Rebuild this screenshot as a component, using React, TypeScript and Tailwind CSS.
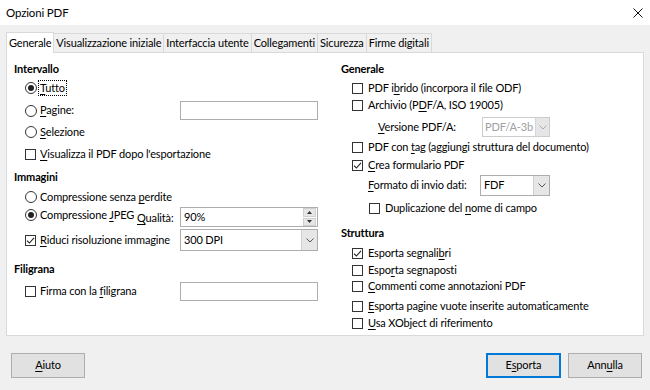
import type { ReactNode } from 'react';

function U({ children }: { children: ReactNode }) {
  return <span className="underline underline-offset-[2px] decoration-[1px]">{children}</span>;
}

function RadioDot({ checked }: { checked?: boolean }) {
  return (
    <span className="w-[12px] h-[12px] rounded-full border border-[#333] bg-white flex items-center justify-center shrink-0">
      {checked && <span className="w-[6px] h-[6px] rounded-full bg-[#222]" />}
    </span>
  );
}

function Box({ checked }: { checked?: boolean }) {
  return (
    <span className="w-[11px] h-[11px] border border-[#333] bg-white flex items-center justify-center shrink-0">
      {checked && (
        <svg width="9" height="9" viewBox="0 0 9 9">
          <path d="M1 4.6 L3.4 7 L8 1.8" stroke="#222" strokeWidth="1.1" fill="none" />
        </svg>
      )}
    </span>
  );
}

function Chevron({ color = '#555' }: { color?: string }) {
  return (
    <svg width="8" height="5" viewBox="0 0 8 5">
      <path d="M0.5 0.5 L4 4 L7.5 0.5" stroke={color} strokeWidth="1" fill="none" />
    </svg>
  );
}

export default function App() {
  return (
    <div className="w-[650px] h-[390px] bg-[#f0f0f0] flex flex-col text-[11px] tracking-[-0.15px] text-[#000] font-['Lato',sans-serif] overflow-hidden">
      {/* Title bar */}
      <div className="h-[25px] bg-white flex items-center justify-between pl-[6px] pr-[6px]">
        <span className="text-[11.5px]">Opzioni PDF</span>
        <svg width="10" height="10" viewBox="0 0 10 10" className="mr-[1px]">
          <path d="M0.5 0.5 L9.5 9.5 M9.5 0.5 L0.5 9.5" stroke="#111" strokeWidth="1" />
        </svg>
      </div>

      {/* Tabs */}
      <div className="flex items-end ml-[6px] mt-[7px] h-[20px]">
        <div className="relative z-10 -mb-px h-[21px] px-[2px] bg-white border-x border-t border-[#d9d9d9] flex items-center">
          Generale
        </div>
        {['Visualizzazione iniziale', 'Interfaccia utente', 'Collegamenti', 'Sicurezza', 'Firme digitali'].map((t) => (
          <div
            key={t}
            className="h-[19px] px-[2px] bg-[#f0f0f0] border-t border-r border-[#d9d9d9] flex items-center whitespace-nowrap"
          >
            {t}
          </div>
        ))}
      </div>

      {/* Panel */}
      <div className="mx-[6px] h-[284px] bg-white border border-[#d9d9d9] flex pl-[7px]">
        {/* Left column */}
        <div className="w-[304px] flex flex-col whitespace-nowrap">
          <div className="mt-[8px] h-[16px] flex items-center font-bold">Intervallo</div>
          <div className="mt-[2px] h-[18px] flex items-center ml-[11px] gap-[2px]">
            <RadioDot checked />
            <span className="outline outline-1 outline-dotted outline-[#000] px-[1px] leading-[14px]">
              <U>T</U>utto
            </span>
          </div>
          <div className="mt-[4px] h-[19px] flex items-center">
            <div className="w-[166px] flex items-center ml-[11px] gap-[3px]">
              <RadioDot />
              <span>
                <U>P</U>agine:
              </span>
            </div>
            <div className="-ml-[11px] w-[138px] h-[19px] border border-[#adadad] bg-white" />
          </div>
          <div className="mt-[3px] h-[18px] flex items-center ml-[11px] gap-[3px]">
            <RadioDot />
            <span>
              <U>S</U>elezione
            </span>
          </div>
          <div className="mt-[4px] h-[18px] flex items-center ml-[11px] gap-[4px]">
            <Box />
            <span>
              <U>V</U>isualizza il PDF dopo l'esportazione
            </span>
          </div>
          <div className="mt-[6px] h-[16px] flex items-center font-bold">Immagini</div>
          <div className="mt-[3px] h-[18px] flex items-center ml-[11px] gap-[3px]">
            <RadioDot />
            <span>
              Compressione senza <U>p</U>erdite
            </span>
          </div>
          <div className="mt-[1px] h-[20px] flex items-center">
            <div className="w-[112px] ml-[11px] flex items-center gap-[3px] -mt-[4px]">
              <RadioDot checked />
              <span>
                Compressione <U>J</U>PEG
              </span>
            </div>
            <span className="w-[43px] mt-[3px]">
              <U>Q</U>ualità:
            </span>
            <div className="w-[138px] h-[20px] border border-[#adadad] bg-white flex items-center">
              <span className="flex-1 pl-[3px]">90%</span>
              <div className="w-[14px] h-[18px] flex flex-col gap-[1px] pr-[1px]">
                <div className="flex-1 bg-[#e6e6e6] border border-[#cfcfcf] flex items-center justify-center">
                  <svg width="5" height="3" viewBox="0 0 5 3">
                    <path d="M0 3 L2.5 0 L5 3 Z" fill="#333" />
                  </svg>
                </div>
                <div className="flex-1 bg-[#e6e6e6] border border-[#cfcfcf] flex items-center justify-center">
                  <svg width="5" height="3" viewBox="0 0 5 3">
                    <path d="M0 0 L2.5 3 L5 0 Z" fill="#333" />
                  </svg>
                </div>
              </div>
            </div>
          </div>
          <div className="mt-[2px] h-[22px] flex items-center">
            <div className="w-[155px] ml-[11px] flex items-center gap-[4px]">
              <Box checked />
              <span>
                <U>R</U>iduci risoluzione immagine
              </span>
            </div>
            <div className="w-[138px] h-[22px] border border-[#adadad] bg-white flex items-center">
              <span className="flex-1 pl-[3px]">300 DPI</span>
              <div className="w-[16px] h-[20px] bg-[#e6e6e6] border-l border-[#d0d0d0] flex items-center justify-center">
                <Chevron />
              </div>
            </div>
          </div>
          <div className="mt-[10px] h-[16px] flex items-center font-bold">Filigrana</div>
          <div className="mt-[5px] h-[19px] flex items-center">
            <div className="w-[155px] ml-[11px] flex items-center gap-[4px]">
              <Box />
              <span>
                Firma con la <U>f</U>iligrana
              </span>
            </div>
            <div className="w-[138px] h-[19px] border border-[#adadad] bg-white" />
          </div>
        </div>

        {/* Right column */}
        <div className="ml-[23px] flex flex-col whitespace-nowrap">
          <div className="mt-[8px] h-[16px] flex items-center font-bold">Generale</div>
          <div className="mt-[3px] h-[16px] flex items-center ml-[11px] gap-[5px]">
            <Box />
            <span>
              PDF i<U>b</U>rido (incorpora il file ODF)
            </span>
          </div>
          <div className="mt-[1px] h-[16px] flex items-center ml-[11px] gap-[5px]">
            <Box />
            <span>
              Archivio (P<U>D</U>F/A, ISO 19005)
            </span>
          </div>
          <div className="mt-[4px] h-[20px] flex items-center ml-[37px]">
            <span className="w-[104px]">
              <U>V</U>ersione PDF/A:
            </span>
            <div className="w-[68px] h-[20px] border border-[#cccccc] bg-white flex items-center">
              <span className="flex-1 pl-[2px] text-[#a0a0a0]">PDF/A-3b</span>
              <div className="w-[14px] h-[18px] bg-[#e6e6e6] border-l border-[#d6d6d6] flex items-center justify-center">
                <Chevron color="#aaa" />
              </div>
            </div>
          </div>
          <div className="mt-[2px] h-[16px] flex items-center ml-[11px] gap-[5px]">
            <Box />
            <span>
              PDF con <U>t</U>ag (aggiungi struttura del documento)
            </span>
          </div>
          <div className="mt-[2px] h-[16px] flex items-center ml-[11px] gap-[5px]">
            <Box checked />
            <span>
              <U>C</U>rea formulario PDF
            </span>
          </div>
          <div className="mt-[2px] h-[21px] flex items-center ml-[27px]">
            <span className="w-[112px]">
              <U>F</U>ormato di invio dati:
            </span>
            <div className="w-[70px] h-[21px] border border-[#adadad] bg-white flex items-center">
              <span className="flex-1 pl-[3px]">FDF</span>
              <div className="w-[16px] h-[19px] bg-[#e6e6e6] border-l border-[#d0d0d0] flex items-center justify-center">
                <Chevron />
              </div>
            </div>
          </div>
          <div className="mt-[4px] h-[16px] flex items-center ml-[28px] gap-[5px]">
            <Box />
            <span>
              Duplicazione del <U>n</U>ome di campo
            </span>
          </div>
          <div className="mt-[9px] h-[16px] flex items-center font-bold">Struttura</div>
          <div className="mt-[4px] h-[16px] flex items-center ml-[11px] gap-[5px]">
            <Box checked />
            <span>
              Esporta segnali<U>b</U>ri
            </span>
          </div>
          <div className="mt-[1px] h-[16px] flex items-center ml-[11px] gap-[5px]">
            <Box />
            <span>
              Espo<U>r</U>ta segnaposti
            </span>
          </div>
          <div className="mt-[0px] h-[16px] flex items-center ml-[11px] gap-[5px]">
            <Box />
            <span>
              <U>C</U>ommenti come annotazioni PDF
            </span>
          </div>
          <div className="mt-[4px] h-[16px] flex items-center ml-[11px] gap-[5px]">
            <Box />
            <span>
              <U>E</U>sporta pagine vuote inserite automaticamente
            </span>
          </div>
          <div className="mt-[1px] h-[16px] flex items-center ml-[11px] gap-[5px]">
            <Box />
            <span>
              <U>U</U>sa XObject di riferimento
            </span>
          </div>
        </div>
      </div>

      {/* Buttons */}
      <div className="mt-[17px] h-[25px] flex items-center px-[8px] pl-[11px]">
        <button className="w-[74px] h-[25px] bg-[#e1e1e1] border border-[#adadad]">
          <U>A</U>iuto
        </button>
        <div className="flex-1" />
        <button className="w-[75px] h-[25px] bg-[#e1e1e1] border-2 border-[#0078d7]">
          E<U>s</U>porta
        </button>
        <button className="ml-[7px] w-[74px] h-[25px] bg-[#e1e1e1] border border-[#adadad]">
          Ann<U>u</U>lla
        </button>
      </div>
    </div>
  );
}
